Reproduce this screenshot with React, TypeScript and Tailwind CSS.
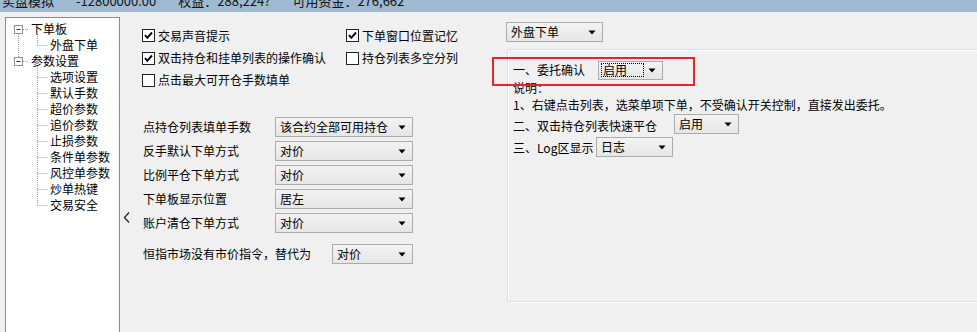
import React from "react";

const FONT = { fontFamily: '"Noto Sans CJK SC", "Microsoft YaHei", sans-serif' };

function Arrow() {
  return (
    <svg width="8" height="5" viewBox="0 0 8 5" className="shrink-0">
      <path d="M0.5 0.5 L7.5 0.5 L4 4.5 Z" fill="#000" />
    </svg>
  );
}

function Select({ text, w, focus = false, h = 20 }: { text: string; w: number; focus?: boolean; h?: number }) {
  return (
    <div
      className="relative flex items-center justify-between border border-[#acacac] bg-gradient-to-b from-[#f3f3f3] to-[#e6e6e6] pl-[4px] pr-[6px] shrink-0"
      style={{ width: w, height: h }}
    >
      {focus ? (
        <span className="border border-dotted border-black px-[1px] h-[14px] w-[43px] flex items-center -ml-[2px] leading-none">{text}</span>
      ) : (
        <span className="leading-none">{text}</span>
      )}
      <Arrow />
    </div>
  );
}

function Checkbox({ checked, label }: { checked: boolean; label: string }) {
  return (
    <div className="flex items-center gap-[3px]">
      <span className="w-[13px] h-[13px] border border-[#222] bg-white flex items-center justify-center shrink-0">
        {checked && (
          <svg width="11" height="11" viewBox="0 0 11 11">
            <path d="M2 5 L4.3 7.8 L9 2.5" stroke="#000" strokeWidth="1.9" fill="none" />
          </svg>
        )}
      </span>
      <span className="leading-none">{label}</span>
    </div>
  );
}

const treeRows: [number, string][] = [
  [0, "下单板"],
  [1, "外盘下单"],
  [0, "参数设置"],
  [1, "选项设置"],
  [1, "默认手数"],
  [1, "超价参数"],
  [1, "追价参数"],
  [1, "止损参数"],
  [1, "条件单参数"],
  [1, "风控单参数"],
  [1, "炒单热键"],
  [1, "交易安全"],
];

function Tree() {
  const dot = { stroke: "#a0a0a0", strokeDasharray: "1 1", strokeWidth: 1 };
  const childCenters = [3, 4, 5, 6, 7, 8, 9, 10, 11].map((i) => 11.5 + 16 * i);
  return (
    <div className="relative ml-[5px] mt-[5px] w-[115px] h-[330px] bg-white border border-[#8a8a8a] shrink-0">
      <svg className="absolute left-0 top-0" width="113" height="220">
        <rect x="8.5" y="7.5" width="8" height="8" fill="#fff" stroke="#919191" />
        <line x1="10.5" y1="11.5" x2="14.5" y2="11.5" stroke="#1f3a7a" />
        <line x1="17" y1="11.5" x2="23" y2="11.5" {...dot} />
        <line x1="12.5" y1="16" x2="12.5" y2="39" {...dot} />
        <line x1="31.5" y1="16" x2="31.5" y2="27.5" {...dot} />
        <line x1="31.5" y1="27.5" x2="42" y2="27.5" {...dot} />
        <rect x="8.5" y="39.5" width="8" height="8" fill="#fff" stroke="#919191" />
        <line x1="10.5" y1="43.5" x2="14.5" y2="43.5" stroke="#1f3a7a" />
        <line x1="17" y1="43.5" x2="23" y2="43.5" {...dot} />
        <line x1="31.5" y1="48" x2="31.5" y2={childCenters[childCenters.length - 1]} {...dot} />
        {childCenters.map((c) => (
          <line key={c} x1="31.5" y1={c} x2="42" y2={c} {...dot} />
        ))}
      </svg>
      <div className="pt-[3px] flex flex-col">
        {treeRows.map(([lvl, t], i) => (
          <div
            key={i}
            className={"h-[16px] flex items-center leading-none text-[12px] text-black " + (lvl === 0 ? "pl-[25px]" : "pl-[44px]")}
          >
            {t}
          </div>
        ))}
      </div>
    </div>
  );
}

export default function App() {
  return (
    <div className="w-[977px] h-[332px] overflow-hidden bg-[#f0f0f0] text-[12px] text-black relative" style={FONT}>
      <div className="h-[12px] bg-[#9fb9d3] overflow-hidden">
        <div className="flex gap-[22px] pl-[2px] -mt-[7px] text-[13px] leading-[16px] text-[#111] whitespace-nowrap">
          <span>实盘模拟</span>
          <span>-12800000.00</span>
          <span>权益：288,224?</span>
          <span>可用资金：276,662</span>
        </div>
      </div>

      <div className="flex">
        <Tree />

        <div className="w-[22px] shrink-0 pt-[200px] pl-[3px]">
          <svg width="8" height="11" viewBox="0 0 8 11">
            <path d="M6 0.5 L1.5 5.5 L6 10.5" stroke="#222" strokeWidth="1.3" fill="none" />
          </svg>
        </div>

        <div className="w-[364px] shrink-0 pt-[12px]">
          <div className="grid grid-cols-[204px_1fr]">
            <div className="h-[23px] flex items-center"><Checkbox checked label="交易声音提示" /></div>
            <div className="h-[23px] flex items-center"><Checkbox checked label="下单窗口位置记忆" /></div>
            <div className="h-[22px] flex items-center"><Checkbox checked label="双击持仓和挂单列表的操作确认" /></div>
            <div className="h-[22px] flex items-center"><Checkbox checked={false} label="持仓列表多空分列" /></div>
            <div className="h-[22px] flex items-center"><Checkbox checked={false} label="点击最大可开仓手数填单" /></div>
            <div />
          </div>

          <div className="mt-[26px] flex flex-col gap-[4px] pl-[1px]">
            {[
              ["点持仓列表填单手数", "该合约全部可用持仓"],
              ["反手默认下单方式", "对价"],
              ["比例平仓下单方式", "对价"],
              ["下单板显示位置", "居左"],
              ["账户清仓下单方式", "对价"],
            ].map(([l, v]) => (
              <div key={l} className="flex items-center h-[20px]">
                <span className="w-[132px] leading-none">{l}</span>
                <Select text={v} w={138} />
              </div>
            ))}
          </div>

          <div className="mt-[11px] flex items-center h-[20px] pl-[1px]">
            <span className="w-[189px] leading-none">恒指市场没有市价指令，替代为</span>
            <Select text="对价" w={81} />
          </div>
        </div>

        <div className="flex-1 pt-[10px]">
          <Select text="外盘下单" w={97} />
          <div className="mt-[7px] ml-[1px] w-[520px] h-[253px] border border-[#d5dfe5] rounded-[2px] shadow-[inset_1px_1px_0_#ffffff,1px_1px_0_#ffffff] pl-[5px] pt-[10px]">
            <div className="flex items-center h-[20px]">
              <span className="w-[85px] leading-none">一、委托确认</span>
              <Select text="启用" w={65} h={19} focus />
            </div>
            <div className="h-[15px] flex items-center leading-none">说明：</div>
            <div className="h-[19px] flex items-center leading-none">1、右键点击列表，选菜单项下单，不受确认开关控制，直接发出委托。</div>
            <div className="flex items-center h-[20px]">
              <span className="w-[161px] leading-none pt-[3px]">二、双击持仓列表快速平仓</span>
              <Select text="启用" w={65} />
            </div>
            <div className="flex items-center h-[20px] mt-[3px]">
              <span className="w-[83px] leading-none pt-[2px]">三、Log区显示</span>
              <Select text="日志" w={77} />
            </div>
          </div>
        </div>
      </div>

      <div className="absolute left-[492px] top-[57px] w-[203px] h-[29px] border-2 border-[#e3242b] pointer-events-none" />
    </div>
  );
}
